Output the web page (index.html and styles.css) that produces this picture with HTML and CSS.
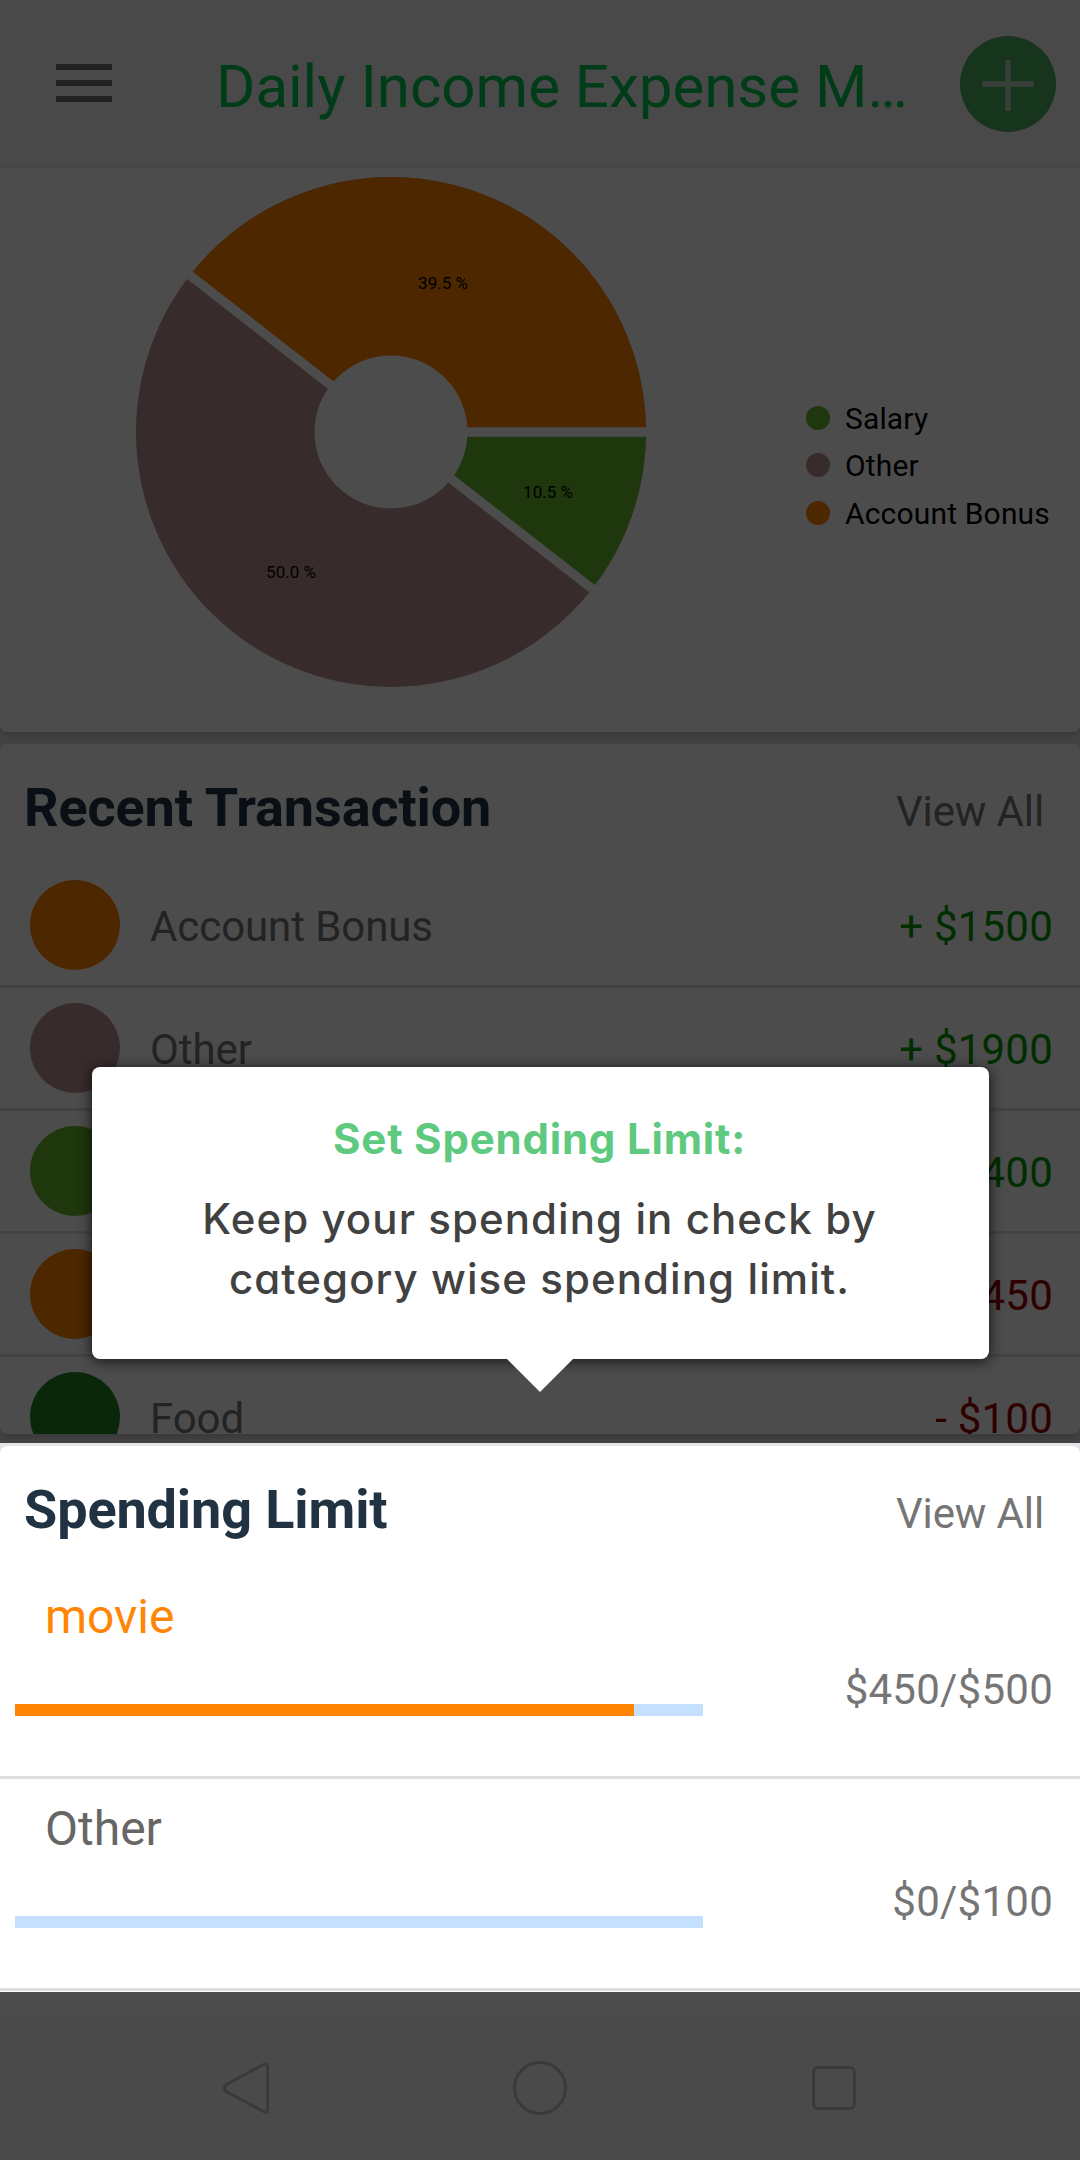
FILE: index.html
```
<!DOCTYPE html>
<html lang="en">
<head>
<meta charset="utf-8">
<title>Daily Income Expense Manager</title>
<link rel="stylesheet" href="styles.css">
</head>
<body>
<div class="screen">
  <header class="appbar">
    <svg class="menu" viewBox="0 0 56 38"><path d="M0 3h56M0 19h56M0 35h56"/></svg>
    <h1 class="appbar-title">Daily Income Expense M…</h1>
    <svg class="add" viewBox="0 0 96 96"><circle cx="48" cy="48" r="48"/><path d="M22 48h52M48 24v51"/></svg>
  </header>

  <section class="card chart">
    <svg class="pie" viewBox="0 0 520 520">
      <circle class="c-mauve" cx="260" cy="260" r="255"/>
      <path class="c-orange" d="M260 260H515A255 255 0 0 0 58.8 103.4Z"/>
      <path class="c-green" d="M260 260L461.2 416.6A255 255 0 0 0 515 260Z"/>
      <path class="gap" d="M260 260H520M54.8 100.2L465.2 419.8"/>
      <circle class="hole" cx="260" cy="260" r="76.5"/>
      <text x="312" y="117">39.5 %</text>
      <text x="417" y="326">10.5 %</text>
      <text x="160" y="406">50.0 %</text>
    </svg>
    <ul class="legend">
      <li><span class="dot b-green"></span>Salary</li>
      <li><span class="dot b-mauve"></span>Other</li>
      <li><span class="dot b-orange"></span>Account Bonus</li>
    </ul>
  </section>

  <section class="card recent">
    <div class="card-head"><h2>Recent Transaction</h2><span class="more">View All</span></div>
    <div class="tx"><span class="avatar b-orange"></span><span class="name">Account Bonus</span><span class="in">+ $1500</span></div>
    <div class="tx"><span class="avatar b-mauve"></span><span class="name">Other</span><span class="in">+ $1900</span></div>
    <div class="tx"><span class="avatar b-green"></span><span class="name"></span><span class="in">400</span></div>
    <div class="tx"><span class="avatar b-orange"></span><span class="name"></span><span class="out">450</span></div>
    <div class="tx"><span class="avatar b-forest"></span><span class="name">Food</span><span class="out">- $100</span></div>
  </section>

  <div class="spotlight">
    <section class="limits">
      <div class="card-head"><h2>Spending Limit</h2><span class="more">View All</span></div>
      <div class="limit">
        <div class="limit-main"><div class="limit-name over">movie</div><div class="bar"><div class="fill" style="width:90%"></div></div></div>
        <span class="limit-sum">$450/$500</span>
      </div>
      <div class="limit">
        <div class="limit-main"><div class="limit-name">Other</div><div class="bar"></div></div>
        <span class="limit-sum">$0/$100</span>
      </div>
    </section>
  </div>

  <div class="rest"></div>
  <nav class="navbar">
    <svg viewBox="0 0 60 60"><path d="M41.500 6.500Q45.500 4 45.500 9V51Q45.500 56 41.500 53.500L5 34Q-.5 30 5 26Z"/></svg>
    <svg viewBox="0 0 60 60"><circle cx="30" cy="30" r="25.500"/></svg>
    <svg viewBox="0 0 60 60"><rect x="9.500" y="9.500" width="41" height="41" rx="4.500"/></svg>
  </nav>

  <div class="scrim"></div>
  <div class="tip">
    <div class="tip-title">Set Spending Limit:</div>
    <div class="tip-text">Keep your spending in check by</div>
    <div class="tip-text">category wise spending limit.</div>
    <svg class="tip-arrow" viewBox="0 0 68 34"><path d="M0 0H68L34 34Z"/></svg>
  </div>
</div>
</body>
</html>
```
FILE: styles.css
```
* { box-sizing: border-box; margin: 0; padding: 0; }
body { font-family: Roboto, sans-serif; background: #e6e6e8; }
.screen { position: relative; width: 1080px; height: 2160px; overflow: hidden; display: flex; flex-direction: column; }

.appbar { height: 168px; flex: none; background: #f5f5f5; display: flex; align-items: center; padding: 0 24px 0 56px; }
.menu { width: 56px; height: 38px; margin-bottom: 2px; }
.menu path { stroke: #6e6e6e; stroke-width: 6; }
.appbar-title { flex: 1; margin-left: 104px; padding-top: 5px; font-size: 60px; font-weight: 400; line-height: 70px; color: #00c853; white-space: nowrap; }
.add { width: 96px; height: 96px; }
.add circle { fill: #4dad61; }
.add path { stroke: #e0e0e0; stroke-opacity: .75; stroke-width: 5.500; }

.card { flex: none; background: #fff; border-radius: 7px; overflow: hidden; box-shadow: 0 3px 9px rgba(0,0,0,.22); }
.chart { height: 564px; margin-bottom: 12px; border-radius: 0 0 7px 7px; display: flex; justify-content: space-between; padding: 4px 30px 0 131px; }
.pie { width: 520px; height: 520px; }
.pie text { font-size: 17px; text-anchor: middle; fill: #000; }
.gap { stroke: #fff; stroke-width: 9.300; fill: none; }
.hole { fill: #fff; }
.c-orange { fill: #ff8400; }
.c-mauve { fill: #bc8f8f; }
.c-green { fill: #67b728; }
.b-orange { background: #ff8400; }
.b-mauve { background: #bc8f8f; }
.b-green { background: #67b728; }
.b-forest { background: #228422; }
.legend { list-style: none; padding-top: 223px; font-size: 30px; letter-spacing: .170px; line-height: 48px; color: #000; }
.legend li { display: flex; height: 47.300px; }
.dot { width: 24px; height: 24px; border-radius: 50%; margin: 11px 15px 0 0; }

.recent { height: 690px; margin-bottom: 9px; }
.card-head { height: 121px; display: flex; justify-content: space-between; align-items: baseline; padding: 32px 36px 0 24px; }
.card-head h2 { font-size: 54px; line-height: 64px; font-weight: 700; letter-spacing: -.120px; color: #213343; }
.more { font-size: 42px; line-height: 50px; letter-spacing: -.120px; color: #757575; }
.tx { height: 123px; border-bottom: 3px solid #dfdfdf; display: flex; align-items: center; padding: 0 27px 0 30px; font-size: 42px; line-height: 50px; color: #757575; }
.avatar { width: 90px; height: 90px; border-radius: 50%; }
.name { flex: 1; margin-left: 30px; padding-top: 3px; letter-spacing: -.080px; }
.in, .out { padding-top: 3px; letter-spacing: .220px; color: #090; }
.out { color: #9a0000; }

.spotlight { position: relative; z-index: 2; flex: none; height: 549px; padding-top: 3px; background: #e6e4e8; }
.limits { height: 546px; background: #fff; border-radius: 7px 7px 0 0; }
.limit { height: 212px; border-bottom: 3px solid #dfdfdf; display: flex; justify-content: space-between; padding: 22px 27px 0 15px; }
.limit-main { width: 688px; }
.limit-name { padding-left: 30px; font-size: 48px; line-height: 56px; color: #666; }
.limit-name.over { color: #ff8505; }
.bar { height: 12px; margin-top: 59px; background: #c5e0ff; }
.fill { height: 12px; background: #ff8505; }
.limit-sum { margin-top: 76px; font-size: 42px; line-height: 50px; letter-spacing: .240px; color: #757575; }

.rest { flex: none; height: 24px; background: #fff; }
.navbar { flex: none; height: 144px; background: #f7f7f7; display: flex; gap: 234px; padding: 42px 0 0 222px; }
.navbar svg { width: 60px; height: 60px; fill: none; stroke: #c1c1c1; stroke-width: 3; }
.navbar svg:nth-child(2) { margin-left: -6px; }

.scrim { position: absolute; inset: 0; z-index: 1; background: rgba(0,0,0,.7); }
.tip { position: absolute; z-index: 3; left: 92px; top: 1067px; width: 897px; height: 292px; background: #fff; border-radius: 8px; box-shadow: 0 2px 14px rgba(0,0,0,.75); text-align: center; font-family: Inter, sans-serif; font-feature-settings: "cv11"; white-space: nowrap; padding: 42px 2px 0 0; }
.tip-title { font-size: 42px; line-height: 60px; font-weight: 700; letter-spacing: .800px; color: #5ec97f; margin-bottom: 20px; }
.tip-text { font-size: 42px; line-height: 60px; font-weight: 500; letter-spacing: 1.070px; color: #414141; }
.tip-arrow { position: absolute; left: 414px; top: 291px; width: 68px; height: 34px; fill: #fff; }
```
